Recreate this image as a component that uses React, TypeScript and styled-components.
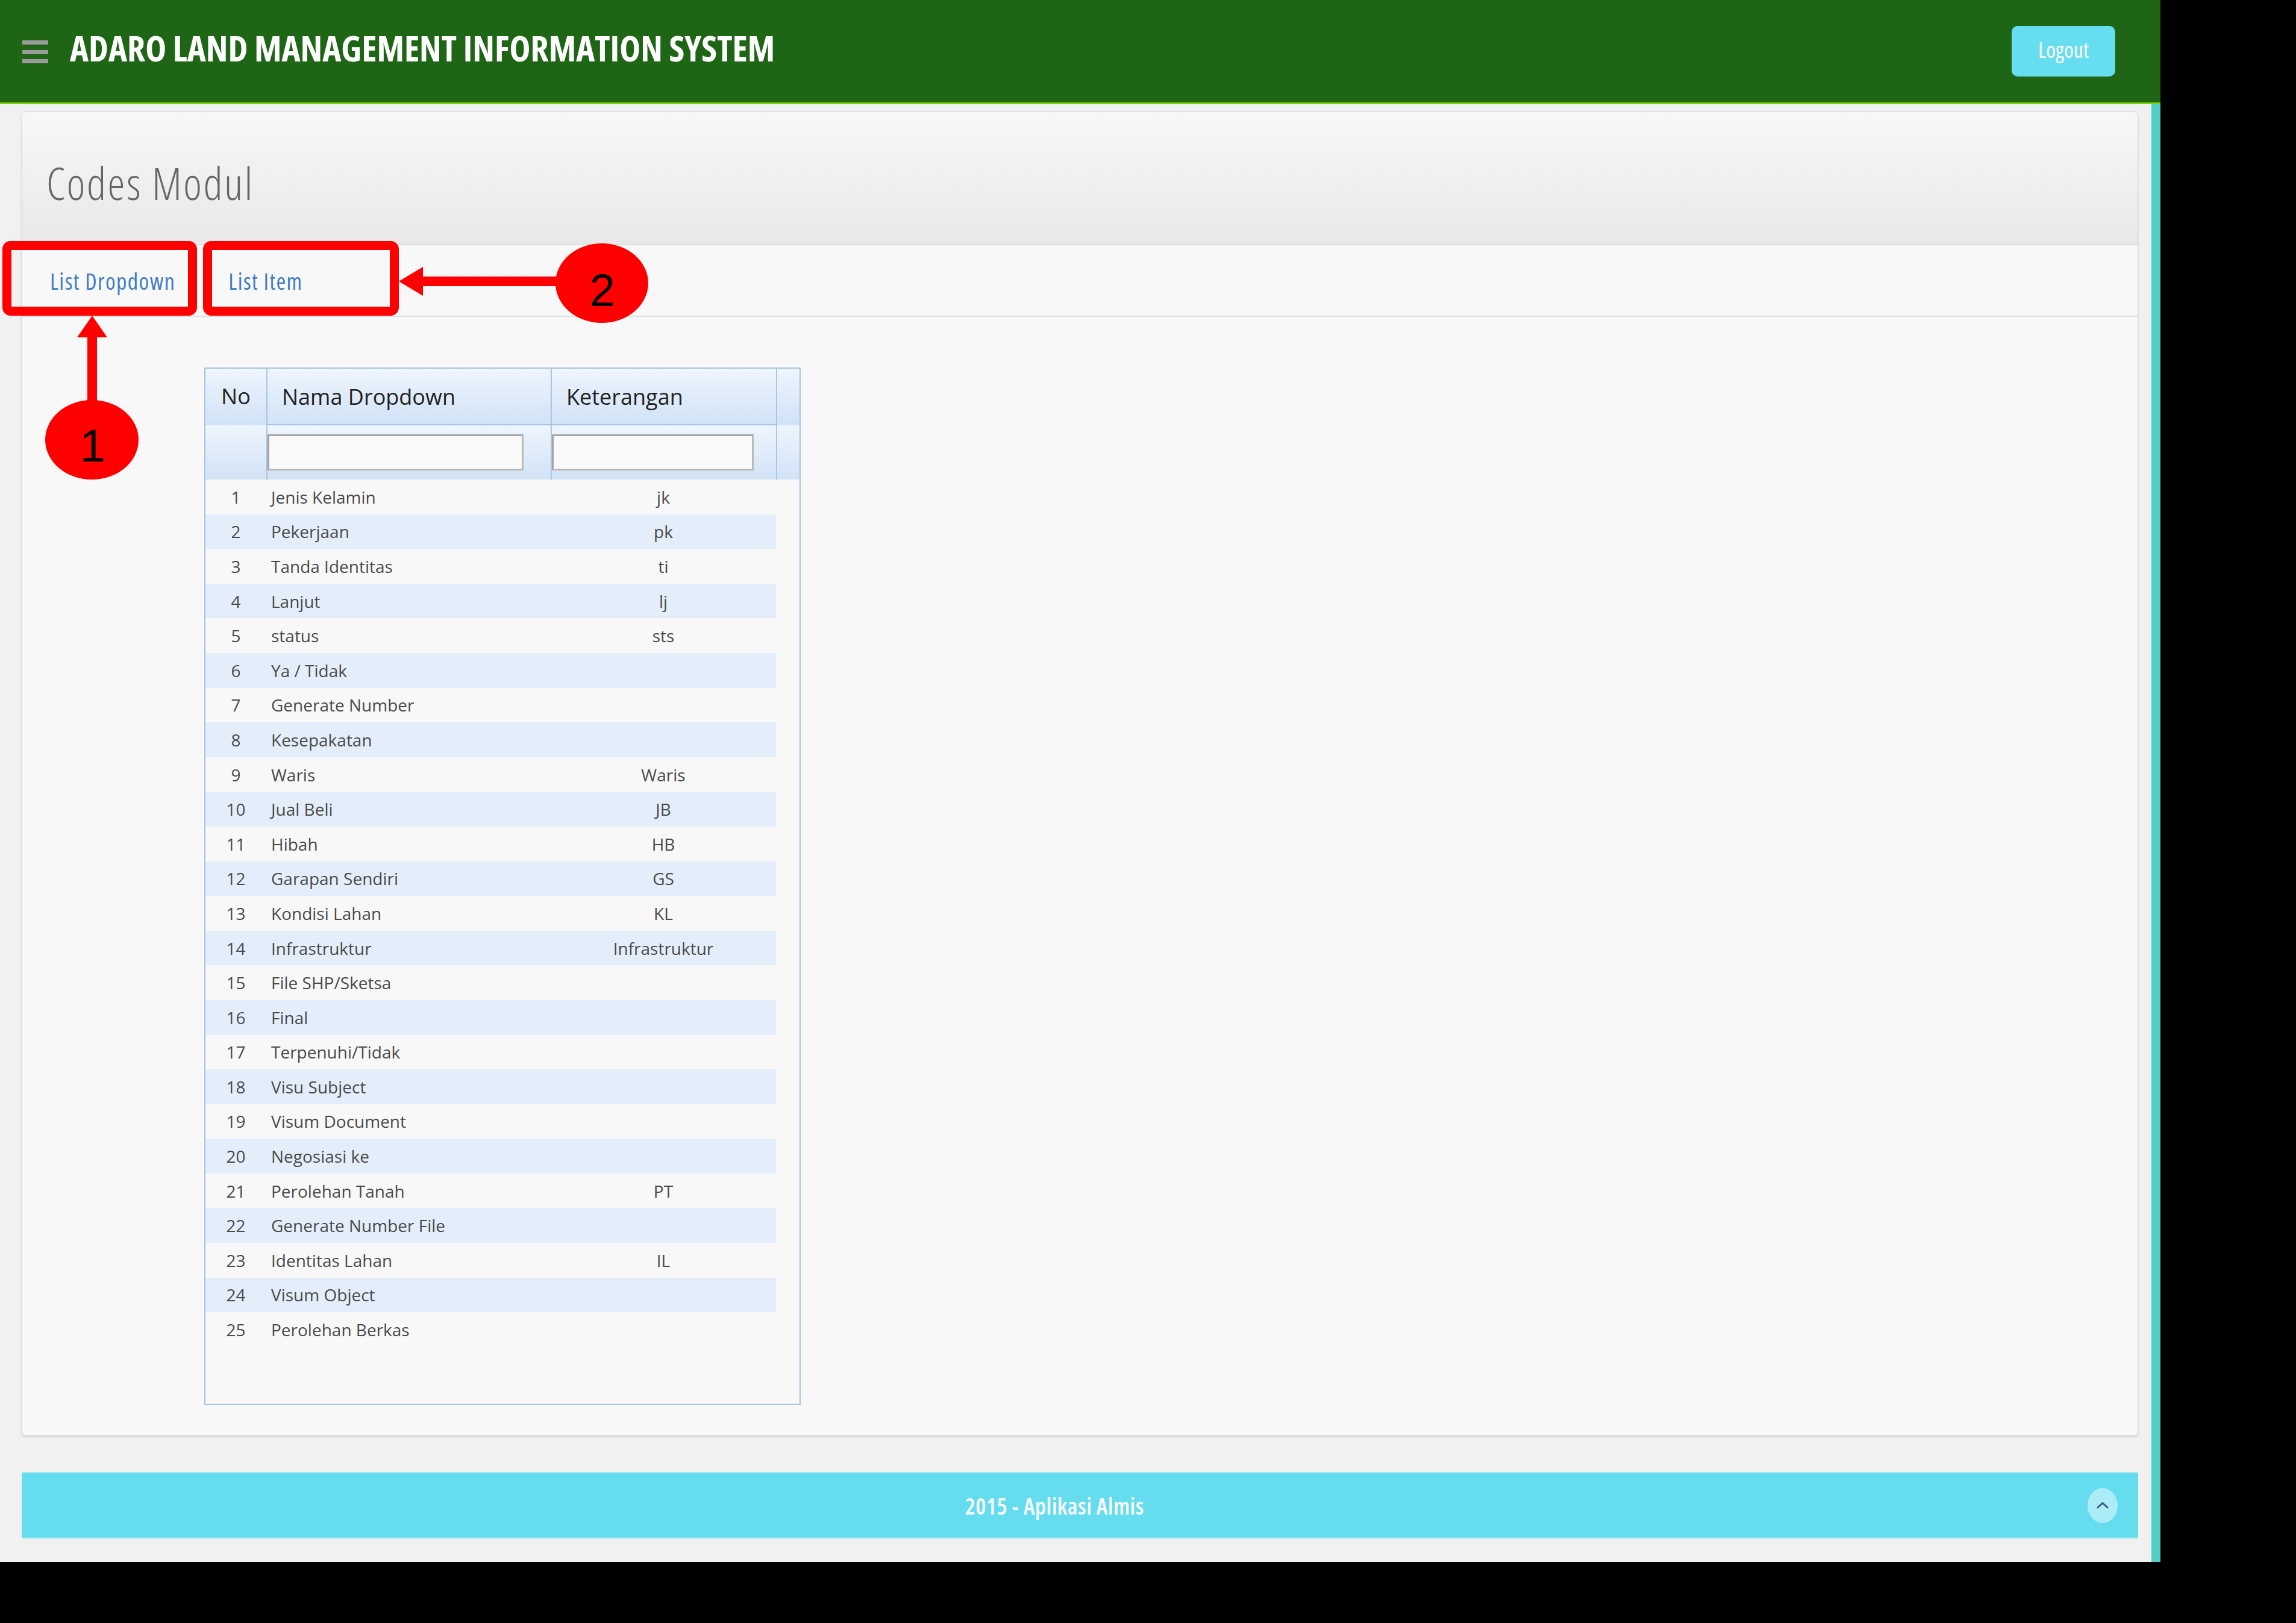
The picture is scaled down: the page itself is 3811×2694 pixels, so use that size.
import React from "react";
import styled, { createGlobalStyle } from "styled-components";

const GlobalStyle = createGlobalStyle`
  html, body { margin: 0; padding: 0; background: #000; }
  *, *::before, *::after { box-sizing: border-box; }
`;

const Screen = styled.div`
  position: relative;
  width: 3586px;
  height: 2593px;
  display: flex;
  flex-direction: column;
  background: #f1f1f1;
  font-family: "Open Sans", "Liberation Sans", sans-serif;
`;

const TopBar = styled.header`
  height: 173px;
  flex: none;
  display: flex;
  align-items: center;
  padding: 0 75px 0 37px;
  background: #1e6516;
  border-bottom: 3px solid #7bd40c;
`;

const MenuIcon = styled.span`
  display: flex;
  flex-direction: column;
  gap: 8.5px;
  width: 43px;
  margin-right: 36px;
  margin-top: 2px;
`;

const MenuBar = styled.span`
  display: block;
  height: 7px;
  background: #9b9b9b;
`;

const AppTitle = styled.h1`
  flex: 1;
  margin: 0;
  padding-bottom: 12px;
  font-size: 59px;
  line-height: 1;
  font-weight: 700;
  font-stretch: 75%;
  color: #ffffff;
  white-space: nowrap;
`;

const LogoutButton = styled.button`
  width: 172px;
  height: 84px;
  padding: 0 0 6px;
  border: none;
  border-radius: 10px;
  background: #66def0;
  color: #ffffff;
  font-family: inherit;
  font-size: 36px;
  font-stretch: 75%;
  cursor: pointer;
`;

const Body = styled.div`
  flex: 1;
  display: flex;
  min-height: 0;
`;

const Main = styled.main`
  flex: 1;
  display: flex;
  flex-direction: column;
  padding: 12px 22px 0 36px;
`;

const SideStrip = styled.div`
  width: 15px;
  flex: none;
  background: #4fcfc4;
`;

const Card = styled.section`
  height: 2198px;
  flex: none;
  display: flex;
  flex-direction: column;
  background: #f8f8f8;
  border: 1px solid #dadada;
  border-radius: 6px;
  box-shadow: 0 2px 4px rgba(0, 0, 0, 0.12);
  overflow: hidden;
`;

const CardHeader = styled.div`
  height: 221px;
  flex: none;
  display: flex;
  align-items: center;
  padding: 16px 0 0 40px;
  background: linear-gradient(#f7f7f7, #e8e8e8);
  border-bottom: 2px solid #dedede;
`;

const PageTitle = styled.h2`
  margin: 0;
  font-size: 73px;
  font-weight: 300;
  font-stretch: 75%;
  letter-spacing: 2.6px;
  color: #666666;
`;

const TabBar = styled.nav`
  height: 119px;
  flex: none;
  display: flex;
  padding-left: 2px;
  border-bottom: 2px solid #dedede;
`;

const Tab = styled.a`
  display: flex;
  align-items: center;
  padding: 0 44px;
  font-size: 38px;
  font-stretch: 75%;
  letter-spacing: 1.4px;
  color: #417ec4;
  text-decoration: none;
`;

const TabPanel = styled.div`
  flex: 1;
  padding: 84px 0 0 302px;
`;

const GridFrame = styled.div`
  width: 990px;
  height: 1722px;
  display: flex;
  flex-direction: column;
  border: 2px solid #a8c4e3;
  background: #f8f8f8;
`;

const HeadGrid = styled.div`
  display: grid;
  grid-template-columns: 101px 472px 374px 1fr;
  grid-template-rows: 94px 90px;
  background: linear-gradient(#eef5fd, #d0e2f6) 0 0 / 100% 94px repeat-y;
  font-size: 36px;
  color: #222;
`;

const NoHead = styled.div`
  grid-row: span 2;
  text-align: center;
  line-height: 92px;
`;

const ColumnHead = styled.div`
  display: flex;
  align-items: center;
  padding-left: 24px;
  border-left: 2px solid #a9c5e3;
  border-bottom: 2px solid #a9c5e3;
`;

const Gutter = styled.div`
  grid-row: span 2;
  border-left: 2px solid #a9c5e3;
`;

const FilterCell = styled.div`
  display: flex;
  align-items: center;
  border-left: 2px solid #a9c5e3;
`;

const FilterInput = styled.input<{ $w: number }>`
  width: ${(p) => p.$w}px;
  height: 60px;
  border: 3px solid #a3a3a3;
  border-right-color: #b8b8b8;
  border-bottom-color: #b8b8b8;
  background: #fafafa;
  outline: none;
`;

const Rows = styled.div`
  width: 947px;
`;

const Row = styled.div<{ $striped: boolean }>`
  display: grid;
  grid-template-columns: 101px 472px 374px;
  align-items: center;
  height: 57.6px;
  background: ${(p) => (p.$striped ? "#e3eefa" : "transparent")};
  font-size: 28px;
  color: #4a4a4a;
`;

const NumCell = styled.span`
  text-align: center;
`;

const NameCell = styled.span`
  padding-left: 8px;
  white-space: nowrap;
`;

const CodeCell = styled.span`
  text-align: center;
`;

const Footer = styled.footer`
  margin-top: 60px;
  height: 111px;
  flex: none;
  display: flex;
  align-items: center;
  padding-right: 34px;
  background: #66ddee;
  border-top: 2px solid #a3e9f3;
  border-bottom: 2px solid #a3e9f3;
`;

const FooterText = styled.span`
  flex: 1;
  text-align: center;
  color: #ffffff;
  font-size: 38px;
  font-weight: 600;
  font-stretch: 75%;
  letter-spacing: 0.6px;
`;

const UpButton = styled.button`
  width: 50px;
  height: 58px;
  padding: 0;
  border: none;
  border-radius: 50%;
  background: rgba(255, 255, 255, 0.45);
  display: flex;
  align-items: center;
  justify-content: center;
`;

const Annotations = styled.svg`
  position: absolute;
  left: 0;
  top: 0;
  pointer-events: none;
  font-family: "Liberation Sans", sans-serif;
`;

const rows: [string, string][] = [
  ["Jenis Kelamin", "jk"],
  ["Pekerjaan", "pk"],
  ["Tanda Identitas", "ti"],
  ["Lanjut", "lj"],
  ["status", "sts"],
  ["Ya / Tidak", ""],
  ["Generate Number", ""],
  ["Kesepakatan", ""],
  ["Waris", "Waris"],
  ["Jual Beli", "JB"],
  ["Hibah", "HB"],
  ["Garapan Sendiri", "GS"],
  ["Kondisi Lahan", "KL"],
  ["Infrastruktur", "Infrastruktur"],
  ["File SHP/Sketsa", ""],
  ["Final", ""],
  ["Terpenuhi/Tidak", ""],
  ["Visu Subject", ""],
  ["Visum Document", ""],
  ["Negosiasi ke", ""],
  ["Perolehan Tanah", "PT"],
  ["Generate Number File", ""],
  ["Identitas Lahan", "IL"],
  ["Visum Object", ""],
  ["Perolehan Berkas", ""],
];

export default function App() {
  return (
    <>
      <GlobalStyle />
      <Screen>
        <TopBar>
          <MenuIcon>
            <MenuBar />
            <MenuBar />
            <MenuBar />
          </MenuIcon>
          <AppTitle>ADARO LAND MANAGEMENT INFORMATION SYSTEM</AppTitle>
          <LogoutButton>Logout</LogoutButton>
        </TopBar>
        <Body>
          <Main>
            <Card>
              <CardHeader>
                <PageTitle>Codes Modul</PageTitle>
              </CardHeader>
              <TabBar>
                <Tab>List Dropdown</Tab>
                <Tab>List Item</Tab>
              </TabBar>
              <TabPanel>
                <GridFrame>
                  <HeadGrid>
                    <NoHead>No</NoHead>
                    <ColumnHead>Nama Dropdown</ColumnHead>
                    <ColumnHead>Keterangan</ColumnHead>
                    <Gutter />
                    <FilterCell>
                      <FilterInput $w={425} />
                    </FilterCell>
                    <FilterCell>
                      <FilterInput $w={335} />
                    </FilterCell>
                  </HeadGrid>
                  <Rows>
                    {rows.map(([name, code], i) => (
                      <Row key={i} $striped={i % 2 === 1}>
                        <NumCell>{i + 1}</NumCell>
                        <NameCell>{name}</NameCell>
                        <CodeCell>{code}</CodeCell>
                      </Row>
                    ))}
                  </Rows>
                </GridFrame>
              </TabPanel>
            </Card>
            <Footer>
              <FooterText>2015 - Aplikasi Almis</FooterText>
              <UpButton>
                <svg width="22" height="12" viewBox="0 0 22 12">
                  <path d="M2 10 L11 2 L20 10" fill="none" stroke="#3d5a80" strokeWidth="3" />
                </svg>
              </UpButton>
            </Footer>
          </Main>
          <SideStrip />
        </Body>
        <Annotations width="1100" height="820" viewBox="0 0 1100 820">
          <rect x="11.5" y="407.5" width="308" height="109" rx="6" fill="none" stroke="#ff0000" strokeWidth="15" />
          <rect x="344.5" y="407.5" width="310" height="109" rx="6" fill="none" stroke="#ff0000" strokeWidth="15" />
          <rect x="145" y="556" width="16" height="110" fill="#ff0000" />
          <polygon points="153,524 128,560 178,560" fill="#ff0000" />
          <ellipse cx="152.5" cy="730" rx="77.5" ry="66" fill="#ff0000" />
          <text x="154" y="766" fontSize="76" textAnchor="middle" fill="#000">1</text>
          <rect x="700" y="459" width="226" height="16" fill="#ff0000" />
          <polygon points="662,467 702,443 702,491" fill="#ff0000" />
          <ellipse cx="999" cy="470" rx="77" ry="66" fill="#ff0000" />
          <text x="1000" y="508" fontSize="76" textAnchor="middle" fill="#000">2</text>
        </Annotations>
      </Screen>
    </>
  );
}
